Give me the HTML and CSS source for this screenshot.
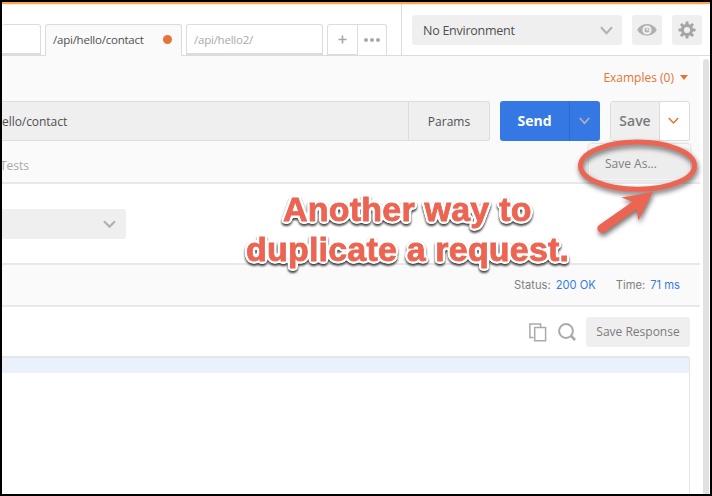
FILE: index.html
```html
<!DOCTYPE html>
<html lang="en">
<head>
<meta charset="utf-8">
<title>Request builder</title>
<link rel="stylesheet" href="styles.css">
</head>
<body>
<div class="window">
  <header class="topbar">
    <div class="tabs">
      <div class="tab tab-cut"></div>
      <div class="tab tab-active"><span class="tab-name">/api/hello/contact</span><span class="dot"></span></div>
      <div class="tab tab-idle"><span class="tab-name">/api/hello2/</span></div>
      <div class="tab-actions">
        <div class="tab-add"><svg width="9" height="9" viewBox="0 0 9 9"><path d="M4.5 .5v8M.5 4.5h8" stroke="#a6a6a6" stroke-width="1.6"/></svg></div>
        <div class="tab-more"><svg width="16" height="4" viewBox="0 0 16 4" fill="#a9a9a9"><circle cx="2" cy="2" r="2"/><circle cx="8" cy="2" r="2"/><circle cx="14" cy="2" r="2"/></svg></div>
      </div>
    </div>
    <div class="environment">
      <div class="env-select"><span>No Environment</span><svg width="13" height="9" viewBox="0 0 13 9"><path d="M1 1.2l5.5 6 5.5-6" fill="none" stroke="#b0b0b0" stroke-width="2"/></svg></div>
      <div class="icon-button"><svg width="20" height="14" viewBox="0 0 20 14"><path d="M.2 7C4.5-.9 15.500-.9 19.800 7 15.500 14.500 4.500 14.500 .2 7z" fill="#b0b0b0"/><circle cx="10" cy="7" r="4.600" fill="#f0f0f0"/><circle cx="10" cy="7" r="2.500" fill="#b0b0b0"/><path d="M10 4.500V7h2.500" fill="none" stroke="#f0f0f0" stroke-width="1.200"/></svg></div>
      <div class="icon-button"><svg width="18" height="18" viewBox="-9 -9 18 18"><g fill="#a5a5a5"><path id="tooth" d="M-1.800-5l.5-3.600h2.600l.5 3.600z"/><use href="#tooth" transform="rotate(45)"/><use href="#tooth" transform="rotate(90)"/><use href="#tooth" transform="rotate(135)"/><use href="#tooth" transform="rotate(180)"/><use href="#tooth" transform="rotate(225)"/><use href="#tooth" transform="rotate(270)"/><use href="#tooth" transform="rotate(315)"/></g><circle r="4.600" fill="none" stroke="#a5a5a5" stroke-width="3"/></svg></div>
    </div>
  </header>
  <div class="body">
    <main class="content">
      <section class="request">
        <div class="examples"><span>Examples (0)</span><i class="caret"></i></div>
        <div class="request-line">
          <div class="url">ello/contact</div>
          <div class="params">Params</div>
          <div class="send"><div class="send-label">Send</div><div class="send-more"><svg width="11" height="8" viewBox="0 0 11 8"><path d="M.8 1l4.700 5.200L10.200 1" fill="none" stroke="#b3b3b3" stroke-width="1.700"/></svg></div></div>
          <div class="save"><div class="save-label">Save</div><div class="save-more"><svg width="11" height="8" viewBox="0 0 11 8"><path d="M.8 1l4.700 5L10.200 1" fill="none" stroke="#e67232" stroke-width="1.500"/></svg></div>
            <div class="save-menu">Save As...</div>
          </div>
        </div>
        <div class="request-tabs">Tests</div>
      </section>
      <section class="auth"><div class="auth-select"><svg width="13" height="9" viewBox="0 0 13 9"><path d="M1 1.200l5.500 5.500L12 1.200" fill="none" stroke="#b0b0b0" stroke-width="2.200"/></svg></div></section>
      <section class="status"><span class="label">Status:</span><span class="value status-value">200 OK</span><span class="label">Time:</span><span class="value">71 ms</span></section>
      <section class="response">
        <div class="response-tools">
          <svg class="copy" width="18" height="19" viewBox="0 0 18 19" fill="none" stroke="#aaa" stroke-width="1.500"><path d="M4.500 14.500H.9V.9h10.700v3"/><path d="M5.700 4.500h10.900v13.200H5.700z"/></svg>
          <svg class="search" width="18" height="19" viewBox="0 0 18 19" fill="none" stroke="#aaa"><circle cx="8" cy="8" r="6.900" stroke-width="2"/><path d="M12.800 12.800l4.300 4.200" stroke-width="2.700"/></svg>
          <div class="save-response">Save Response</div>
        </div>
        <div class="editor"><div class="active-line"></div></div>
      </section>
    </main>
    <div class="scrollbar"><div class="thumb"></div></div>
  </div>
  <svg class="callout" width="360" height="100" viewBox="228 182 360 100">
    <defs>
      <filter id="outline" filterUnits="userSpaceOnUse" x="228" y="182" width="360" height="100" color-interpolation-filters="sRGB">
        <feGaussianBlur in="SourceAlpha" stdDeviation="1.7"/>
        <feComponentTransfer result="halo">
          <feFuncR type="linear" slope="0" intercept="1"/><feFuncG type="linear" slope="0" intercept="1"/><feFuncB type="linear" slope="0" intercept="1"/>
          <feFuncA type="linear" slope="18" intercept="-.5"/>
        </feComponentTransfer>
        <feMerge><feMergeNode in="halo"/><feMergeNode in="SourceGraphic"/></feMerge>
      </filter>
    </defs>
    <g filter="url(#outline)">
      <text x="283" y="221" textLength="248.5">Another way to</text>
      <text x="246" y="261" textLength="323">duplicate a request.</text>
    </g>
  </svg>
  <svg class="marker" width="136" height="114" viewBox="574 134 136 114">
    <ellipse cx="637.500" cy="165.700" rx="57" ry="23.600" fill="none" stroke="#ec6452" stroke-width="5"/>
    <path d="M598.800 225.300L632.500 201.800 621.500 197.400 653 192 638.300 220.500 636.800 209.300 603.800 232.800A4.600 4.600 0 0 1 598.800 225.300z" fill="#ec6452"/>
  </svg>
</div>
</body>
</html>
```
FILE: styles.css
```css
* { box-sizing: border-box; }
body { margin: 0; font-family: "Open Sans", "Noto Sans", sans-serif; font-size: 12px; color: #505050; }
svg { display: block; flex: none; }
.window { position: relative; width: 712px; height: 496px; border: 2px solid #000; background: #fff; overflow: hidden; display: flex; flex-direction: column; }

.topbar { flex: none; height: 54px; border-top: 2px solid #f8a942; border-bottom: 1px solid #dcdcdc; display: flex; box-shadow: inset 0 1px #fff0d5; }
.tabs { width: 399px; display: flex; align-items: flex-end; }
.tab { height: 31px; border: 1px solid #dcdcdc; border-bottom-width: 2px; border-radius: 3px 3px 0 0; display: flex; align-items: center; padding: 1px 7px 0; font-size: 11.5px; letter-spacing: -.23px; white-space: nowrap; }
.tab-cut { width: 39px; border-left: 0; margin-right: 4px; }
.tab-active { width: 137px; margin: 0 4px -1px 0; height: 32px; border-bottom: 0; padding-bottom: 3px; background: #fafafa; justify-content: space-between; }
.tab-idle { width: 137px; margin-right: 4px; color: #aaa; }
.dot { width: 9px; height: 9px; border-radius: 50%; background: #e57438; margin-right: 2px; }
.tab-actions { display: flex; height: 31px; width: 60px; border: 1px solid #dcdcdc; border-bottom: 0; border-radius: 3px 3px 0 0; }
.tab-add { width: 30px; border-right: 1px solid #dcdcdc; border-bottom: 1px solid #dcdcdc; display: grid; place-items: center; }
.tab-more { flex: 1; display: grid; place-items: center; }
.environment { flex: 1; border-left: 1px solid #dcdcdc; display: flex; gap: 10px; padding: 11px 0 0 10px; }
.env-select { width: 210px; height: 30px; border-radius: 3px; background: #efefef; display: flex; align-items: center; justify-content: space-between; padding: 0 9px 0 11px; font-size: 12.5px; letter-spacing: -.25px; }
.icon-button { width: 30px; height: 30px; border-radius: 3px; background: #efefef; display: grid; place-items: center; }

.body { flex: 1; min-height: 0; display: flex; }
.content { width: 698px; display: flex; flex-direction: column; }
.request { height: 128px; flex: none; background: #fafafa; border-bottom: 2px solid #e8e8e8; }
.examples { height: 45px; padding: 0 12px 3px 0; display: flex; align-items: center; justify-content: flex-end; gap: 6px; color: #e67436; }
.caret { border: 4px solid transparent; border-top: 5px solid #e67436; border-bottom: 0; margin-top: 1px; }
.request-line { display: flex; height: 40px; }
.url { width: 407px; border: 1px solid #dcdcdc; border-left: 0; background: #efefef; line-height: 39px; letter-spacing: -.05px; }
.params { width: 81px; border: 1px solid #dcdcdc; border-left: 0; border-radius: 0 3px 3px 0; background: #efefef; line-height: 39px; text-align: center; margin-right: 10px; }
.send { width: 100px; background: #3678e3; border-radius: 3px; display: flex; margin-right: 10px; overflow: hidden; }
.send-label { width: 70px; border-right: 1px solid #3069c8; color: #fff; font-weight: 700; font-size: 14px; line-height: 40px; text-align: center; }
.send-more { flex: 1; display: grid; place-items: center; padding-right: 2px; }
.save { position: relative; width: 80px; border: 1px solid #dcdcdc; border-radius: 3px; display: flex; }
.save-label { width: 49px; border-right: 1px solid #dcdcdc; background: #efefef; color: #7b7b7b; font-size: 14px; font-weight: 600; line-height: 38px; text-align: center; }
.save-more { flex: 1; display: grid; place-items: center; background: #fff; border-radius: 3px; padding-right: 2px; }
.save-menu { position: absolute; left: -22px; top: 42px; width: 101px; height: 36px; background: #ededed; border: 2px solid #f7f7f7; border-width: 4px 1px 1px; border-radius: 3px; box-shadow: 0 0 3px #bbb; padding-left: 15px; line-height: 32px; color: #808080; }
.request-tabs { padding-top: 16px; line-height: 17px; color: #aaa; margin-left: -2px; }

.auth { height: 81px; flex: none; border-bottom: 2px solid #e8e8e8; padding-top: 25px; }
.auth-select { width: 124px; height: 30px; background: #efefef; border-radius: 0 3px 3px 0; display: flex; align-items: center; justify-content: flex-end; padding-right: 10px; }
.status { height: 42px; flex: none; background: #fafafa; border-bottom: 2px solid #e8e8e8; display: flex; align-items: center; justify-content: flex-end; padding-right: 20px; font-family: Inter, sans-serif; font-size: 11.2px; }
.label { color: #808080; margin-right: 5px; }
.value { color: #397be3; }
.status-value { margin-right: 20px; }
.response { flex: 1; display: flex; flex-direction: column; padding: 10px 10px 0 0; }
.response-tools { display: flex; height: 30px; align-items: center; justify-content: flex-end; margin-bottom: 9px; }
.copy { margin-right: 11px; }
.search { margin-right: 10px; }
.save-response { width: 104px; height: 30px; border-radius: 3px; background: #efefef; color: #7b7b7b; text-align: center; line-height: 30px; }
.editor { flex: 1; border: 2px solid #e5e5e5; border-left: 0; border-bottom: 0; border-right-width: 1px; border-radius: 0 3px 0 0; }
.active-line { height: 15px; background: #e9f1fd; }
.scrollbar { flex: 1; background: #fff; padding: 3px 1px 0 3px; }
.thumb { height: 100%; background: #e1e1e1; border-radius: 3px 3px 0 0; }

.callout { position: absolute; left: 226px; top: 180px; font: bold 34px "Liberation Sans", Arial, sans-serif; fill: #ec6452; stroke: #ec6452; stroke-width: .8px; filter: drop-shadow(0 2px 1.2px rgba(0,0,0,.75)); }
.marker { position: absolute; left: 572px; top: 132px; filter: drop-shadow(1px 3px 2.5px rgba(0,0,0,.55)); }
```
